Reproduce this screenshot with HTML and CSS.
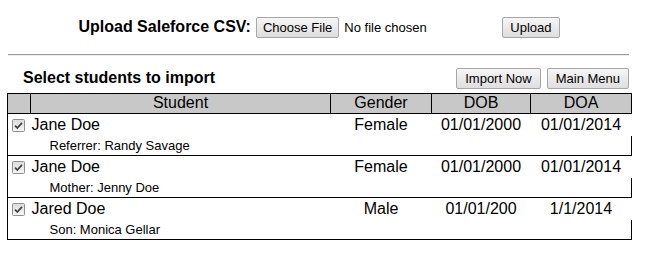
FILE: index.html
```html
<!DOCTYPE html>
<html lang="en">
<head>
    <meta charset="UTF-8">
    <title>Import Students</title>
    <link rel="stylesheet" href="styles.css">
</head>
<body>
    <div class="page">
        <form class="upload-row">
            <label class="upload-label" for="csv">Upload Saleforce CSV:</label>
            <span class="file-input" id="csv">
                <button type="button" class="btn">Choose File</button><span class="file-name">No file chosen</span>
            </span>
            <button type="button" class="btn btn-upload">Upload</button>
        </form>

        <hr class="divider">

        <div class="import-bar">
            <h2 class="import-title">Select students to import</h2>
            <div class="import-actions">
                <button type="button" class="btn btn-wide">Import Now</button>
                <button type="button" class="btn btn-wide">Main Menu</button>
            </div>
        </div>

        <table class="students">
            <colgroup>
                <col class="col-check">
                <col class="col-student">
                <col class="col-gender">
                <col class="col-dob">
                <col class="col-doa">
            </colgroup>
            <thead>
                <tr>
                    <th></th>
                    <th>Student</th>
                    <th>Gender</th>
                    <th>DOB</th>
                    <th>DOA</th>
                </tr>
            </thead>
            <tbody>
                <tr class="main-row">
                    <td class="check-cell"><span class="check"><svg viewBox="0 0 13 13" width="13" height="13"><defs><linearGradient id="cb" x1="0" y1="0" x2="0" y2="1"><stop offset="0" stop-color="#dcdcdc"/><stop offset="1" stop-color="#f6f6f6"/></linearGradient></defs><rect x="0.5" y="0.5" width="12" height="12" rx="1" fill="url(#cb)" stroke="#8f8f8f"/><path d="M3 6.6 L5.3 9 L10 3.8" fill="none" stroke="#444" stroke-width="1.8"/></svg></span></td>
                    <td class="name">Jane Doe</td>
                    <td>Female</td>
                    <td>01/01/2000</td>
                    <td>01/01/2014</td>
                </tr>
                <tr class="note-row">
                    <td></td>
                    <td colspan="4">Referrer: Randy Savage</td>
                </tr>
                <tr class="main-row">
                    <td class="check-cell"><span class="check"><svg viewBox="0 0 13 13" width="13" height="13"><rect x="0.5" y="0.5" width="12" height="12" rx="1" fill="url(#cb)" stroke="#8f8f8f"/><path d="M3 6.6 L5.3 9 L10 3.8" fill="none" stroke="#444" stroke-width="1.8"/></svg></span></td>
                    <td class="name">Jane Doe</td>
                    <td>Female</td>
                    <td>01/01/2000</td>
                    <td>01/01/2014</td>
                </tr>
                <tr class="note-row">
                    <td></td>
                    <td colspan="4">Mother: Jenny Doe</td>
                </tr>
                <tr class="main-row">
                    <td class="check-cell"><span class="check"><svg viewBox="0 0 13 13" width="13" height="13"><rect x="0.5" y="0.5" width="12" height="12" rx="1" fill="url(#cb)" stroke="#8f8f8f"/><path d="M3 6.6 L5.3 9 L10 3.8" fill="none" stroke="#444" stroke-width="1.8"/></svg></span></td>
                    <td class="name">Jared Doe</td>
                    <td>Male</td>
                    <td>01/01/200</td>
                    <td>1/1/2014</td>
                </tr>
                <tr class="note-row">
                    <td></td>
                    <td colspan="4">Son: Monica Gellar</td>
                </tr>
            </tbody>
        </table>
    </div>
</body>
</html>
```

FILE: styles.css
```css
body {
    margin: 0;
    font-family: 'Liberation Sans', Arial, sans-serif;
    color: #000;
    background: #fff;
}

.page {
    width: 624px;
    margin-left: 7px;
}

.btn {
    height: 21px;
    padding: 2px 6px;
    border: 1px solid #a6a6a6;
    border-radius: 2px;
    background: linear-gradient(#f6f6f6, #dedede);
    font-family: 'Liberation Sans', Arial, sans-serif;
    font-size: 13px;
    line-height: 15px;
    color: #000;
    box-sizing: border-box;
}

.btn-upload {
    padding: 2px 7px;
}

.btn-wide {
    padding: 2px 8px;
}

.upload-row {
    display: flex;
    justify-content: center;
    align-items: baseline;
    margin: 0;
    padding-top: 17px;
}

.upload-label {
    font-size: 16px;
    font-weight: bold;
    margin-right: 5px;
}

.file-input {
    display: flex;
    align-items: baseline;
}

.file-name {
    width: 158px;
    padding-left: 5px;
    font-size: 13px;
}

.divider {
    height: 0;
    margin: 16px 2px 0 1px;
    border: none;
    border-top: 1px solid #9a9a9a;
    border-bottom: 1px solid #eee;
}

.import-bar {
    display: flex;
    justify-content: space-between;
    align-items: baseline;
    margin-top: 12px;
}

.import-title {
    margin: 0 0 0 16px;
    font-size: 16px;
    font-weight: bold;
}

.import-actions {
    display: flex;
    gap: 6px;
    margin-right: 2px;
}

.students {
    width: 624px;
    margin-top: 4px;
    border-collapse: collapse;
    border-left: 1px solid #000;
    table-layout: fixed;
    font-size: 16px;
}

.col-check { width: 23px; }
.col-student { width: 300px; }
.col-gender { width: 101px; }
.col-dob { width: 99px; }
.col-doa { width: 101px; }

.students th {
    padding: 0 1px 1px;
    border: 1px solid #000;
    background-color: #c8c8c8;
    font-weight: normal;
    line-height: 18px;
}

.main-row td {
    padding: 2px 1px;
    line-height: 18px;
    text-align: center;
}

.main-row .name {
    text-align: left;
}

.main-row .check-cell {
    padding: 0;
    vertical-align: middle;
}

.check {
    display: block;
    width: 13px;
    height: 13px;
    margin-left: 4px;
}

.check svg {
    display: block;
}

.note-row td {
    padding: 2px 1px 2px 19px;
    border-bottom: 1px solid #000;
    font-size: 13px;
    line-height: 15px;
}

.note-row td:last-child {
    border-right: 1px solid #000;
}
```
